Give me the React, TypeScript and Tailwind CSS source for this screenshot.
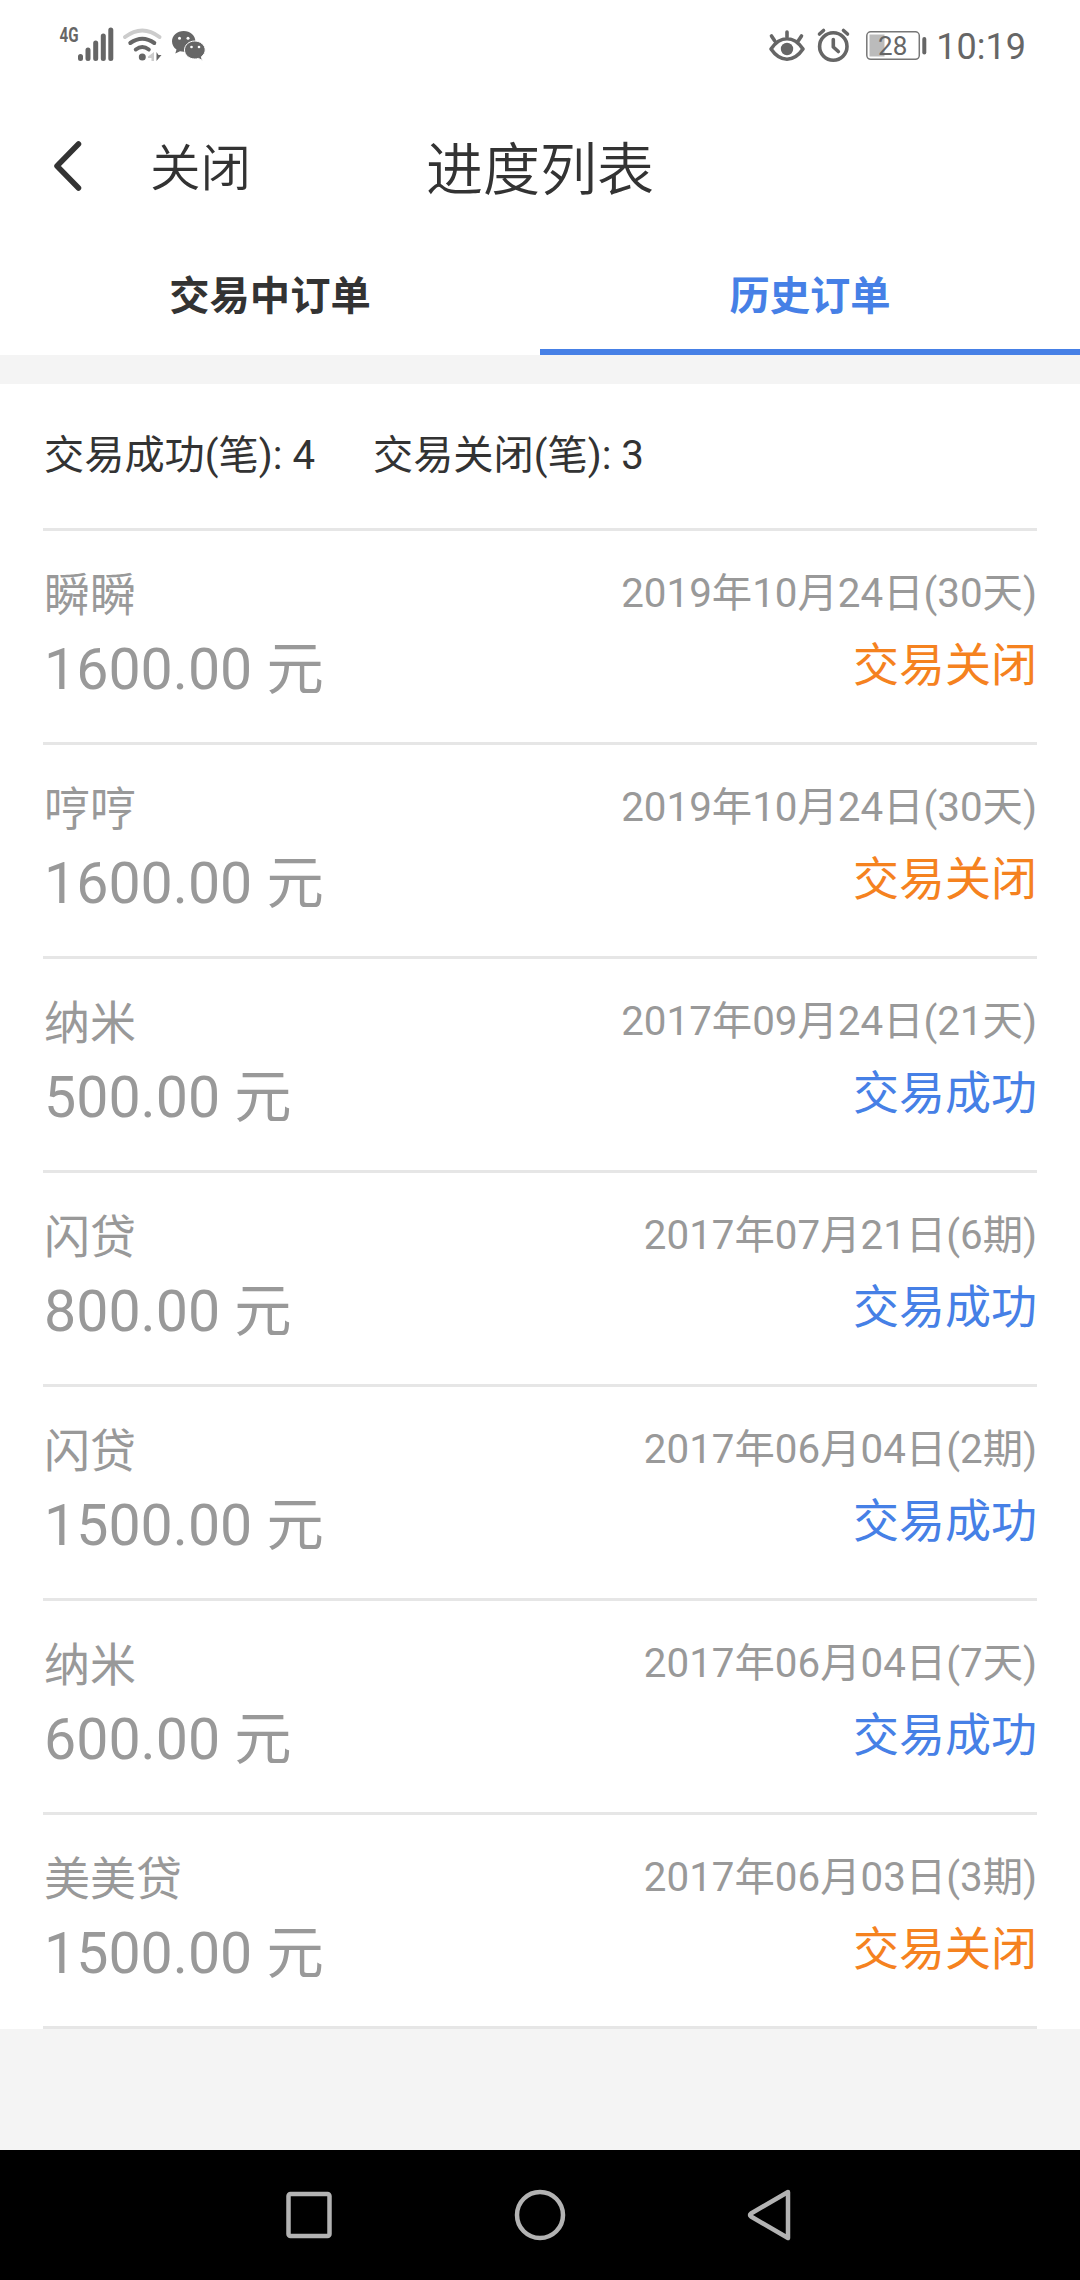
import React, { useState } from "react";

interface Order {
  name: string;
  amount: string;
  date: string;
  success: boolean;
}

const orders: Order[] = [
  { name: "瞬瞬", amount: "1600.00", date: "2019年10月24日(30天)", success: false },
  { name: "哼哼", amount: "1600.00", date: "2019年10月24日(30天)", success: false },
  { name: "纳米", amount: "500.00", date: "2017年09月24日(21天)", success: true },
  { name: "闪贷", amount: "800.00", date: "2017年07月21日(6期)", success: true },
  { name: "闪贷", amount: "1500.00", date: "2017年06月04日(2期)", success: true },
  { name: "纳米", amount: "600.00", date: "2017年06月04日(7天)", success: true },
  { name: "美美贷", amount: "1500.00", date: "2017年06月03日(3期)", success: false },
];

const tabs = ["交易中订单", "历史订单"];

const StatusBar: React.FC = () => (
  <div className="flex h-[90px] items-start justify-between pr-[54px] pl-[58px] text-[#666]">
    <svg className="h-[90px] w-[150px]" viewBox="58 0 150 90" fill="none">
      <text
        x="59.5"
        y="42"
        fontSize="20.5"
        fontWeight="700"
        textLength="19"
        lengthAdjust="spacingAndGlyphs"
        fill="currentColor"
      >
        4G
      </text>
      <path
        d="M80.5 56.5v2M88 50v8.500M95.700 43v15.500M103.300 36v22.500M110.800 30v28.500"
        stroke="currentColor"
        strokeWidth="5"
        strokeLinecap="round"
      />
      <path d="M125 37Q142.300 24 159.500 37" stroke="#ccc" strokeWidth="4" strokeLinecap="round" />
      <path
        d="M130.300 43Q142.300 34.500 154.300 43M135.800 49.500Q142.300 44.500 148.800 49.500"
        stroke="currentColor"
        strokeWidth="4"
        strokeLinecap="round"
      />
      <circle cx="142.300" cy="57" r="3.500" fill="currentColor" />
      <path d="M154 52v9h-2.500v-3h-3.500v-1.500z" fill="#ccc" />
      <path d="M156.500 52v9l5-6h-3z" fill="currentColor" />
      <path
        d="M183.700 31c-6.500 0-11.700 4.500-11.700 10.300 0 3.600 1.800 6.300 4.500 8.200l-1.200 4 4.700-2.300c1.200.3 2.400.5 3.700.5 6.500 0 11.700-4.600 11.700-10.400S190.200 31 183.700 31z"
        fill="currentColor"
      />
      <path
        d="M194.800 41c-5.700 0-10.300 4-10.300 9s4.600 9 10.300 9c1.300 0 2.500-.2 3.600-.6l4 2-1-3.700c2.300-1.700 3.800-4 3.800-6.700 0-5-4.700-9-10.400-9z"
        fill="currentColor"
        stroke="#fff"
        strokeWidth="1"
      />
      <circle cx="179.500" cy="38.300" r="1.500" fill="#fff" />
      <circle cx="188" cy="38.300" r="1.500" fill="#fff" />
      <circle cx="191.500" cy="47" r="1.300" fill="#fff" />
      <circle cx="199" cy="47" r="1.300" fill="#fff" />
    </svg>
    <div className="flex">
      <svg className="h-[90px] w-[170px]" viewBox="766 0 170 90" fill="none">
        <g stroke="currentColor" strokeWidth="3.600" strokeLinecap="round" strokeLinejoin="round">
          <path d="M771 49Q778 38.800 787 38.800T803 49Q796 59.200 787 59.200T771 49zM787 32v5M771.500 36l3 4.500M801.500 36l-3 4.500" />
          <circle cx="833.300" cy="46.500" r="13.700" />
          <path d="M833.300 39.500v7.500l5 4.500M819.500 34l4-3.500M847.500 34l-4-3.500" />
        </g>
        <circle cx="787" cy="49" r="6.200" fill="currentColor" />
        <rect x="869.500" y="34.500" width="15" height="22" fill="#bbb" />
        <rect x="866.800" y="31.800" width="52.500" height="27.500" rx="4" stroke="#777" strokeWidth="1.500" />
        <path d="M924.300 39v13.500" stroke="currentColor" strokeWidth="4" strokeLinecap="round" />
        <text x="892.700" y="54.800" fontSize="26" textAnchor="middle" fill="currentColor">
          28
        </text>
      </svg>
      <span className="pt-[26px] text-[36px] leading-[42px]">10:19</span>
    </div>
  </div>
);

const TitleBar: React.FC = () => (
  <div className="grid h-[156px] grid-cols-[1fr_auto_1fr] items-center text-[#333]">
    <div className="flex items-center pl-[51px]">
      <svg className="mb-[5px] h-[54px] w-[34px]" viewBox="0 0 34 54" fill="none">
        <path
          d="M27.500 5L6 27l21.500 22"
          stroke="currentColor"
          strokeWidth="5.500"
          strokeLinecap="round"
          strokeLinejoin="round"
        />
      </svg>
      <button className="ml-[65px] pt-[2px] text-[50.5px] font-[350]">关闭</button>
    </div>
    <h1 className="pt-[5px] text-[57px] font-[350]">进度列表</h1>
    <div />
  </div>
);

const OrderRow: React.FC<{ order: Order }> = ({ order }) => (
  <li className="flex h-[214px] justify-between border-b-3 border-[#e6e6e6] text-[#999]">
    <div className="pt-[30px] pl-px">
      <p className="text-[46px] leading-[68px]">{order.name}</p>
      <p className="text-[57.3px] leading-[82px]">{order.amount} 元</p>
    </div>
    <div className="pt-[30px] text-right">
      <p className="text-[40.35px] leading-[66px]">{order.date}</p>
      <p
        className={`text-[46px] leading-[76px] ${
          order.success ? "text-[#4680e6]" : "text-[#f5821f]"
        }`}
      >
        {order.success ? "交易成功" : "交易关闭"}
      </p>
    </div>
  </li>
);

const NavBar: React.FC = () => (
  <div className="flex h-[130px] items-center justify-center gap-[181px] bg-black text-[#b3b3b3]">
    <svg className="h-[52px] w-[48px]" viewBox="0 0 48 52" fill="none" stroke="currentColor" strokeWidth="4.500">
      <rect x="3.500" y="5" width="41" height="42" rx="2" />
    </svg>
    <svg className="h-[52px] w-[52px]" viewBox="0 0 52 52" fill="none" stroke="currentColor" strokeWidth="4.500">
      <circle cx="26" cy="26" r="23" />
    </svg>
    <svg className="h-[52px] w-[48px]" viewBox="0 0 48 52" fill="none" stroke="currentColor" strokeWidth="4.500">
      <path d="M41 3L4 24.500q-2 1.500 0 3l37 21.500z" strokeLinejoin="round" />
    </svg>
  </div>
);

const App: React.FC = () => {
  const [activeTab, setActiveTab] = useState<number>(1);

  return (
    <div className="flex h-[2280px] w-[1080px] flex-col bg-[#f4f4f4] font-['Roboto','Noto_Sans_CJK_SC',sans-serif]">
      <header className="bg-white">
        <StatusBar />
        <TitleBar />
        <div className="grid h-[109px] grid-cols-2">
          {tabs.map((tab, index) => (
            <button
              key={tab}
              onClick={() => setActiveTab(index)}
              className={`border-b-6 text-[40.3px] font-bold ${
                activeTab === index
                  ? "border-[#4680e6] text-[#4680e6]"
                  : "border-transparent text-[#333]"
              }`}
            >
              {tab}
            </button>
          ))}
        </div>
      </header>

      <main className="mt-[29px] bg-white px-[43px]">
        <div className="flex h-[147px] items-center gap-[58px] border-b-3 border-[#e6e6e6] pl-px text-[40.2px] text-[#333]">
          <span>交易成功(笔): 4</span>
          <span>交易关闭(笔): 3</span>
        </div>
        <ul>
          {orders.map((order, index) => (
            <OrderRow key={index} order={order} />
          ))}
        </ul>
      </main>

      <footer className="mt-auto">
        <NavBar />
      </footer>
    </div>
  );
};

export default App;
